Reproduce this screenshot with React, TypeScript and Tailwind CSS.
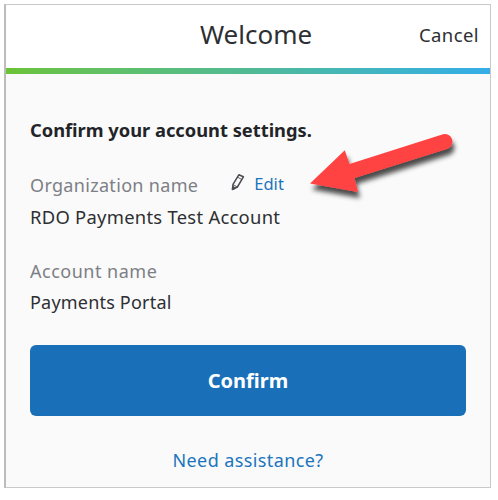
import type { ReactNode } from 'react';

interface FieldProps {
  label: ReactNode;
  value: ReactNode;
  action?: ReactNode;
}

function PencilIcon() {
  return (
    <svg
      className="-mt-[8px]"
      width="14"
      height="18"
      viewBox="0 0 14 18"
      fill="none"
      stroke="#4a4c50"
      strokeWidth="1.5"
      strokeLinejoin="round"
    >
      <path d="M7.8 1.8 12.4 3.8 6.4 14 1.5 16.4 2 11.4Z" />
      <path d="M6.6 4.2 10.6 6.4M2.2 11.6 6.2 14" strokeWidth="0.9" />
      <path d="M1.5 16.4 1.8 13.6 4 15.2Z" fill="#4a4c50" />
    </svg>
  );
}

function Field({ label, value, action }: FieldProps) {
  return (
    <div className="text-[18px] leading-[31px]">
      <div className="flex items-center text-[#7d7f86]">
        {label}
        {action}
      </div>
      <div className="flex text-[#2d2f33]">{value}</div>
    </div>
  );
}

function Arrow() {
  return (
    <svg
      className="absolute left-[300px] top-[124px] pointer-events-none"
      width="170"
      height="86"
      viewBox="300 124 170 86"
    >
      <defs>
        <filter id="arrow-shadow" x="-20%" y="-20%" width="140%" height="160%">
          <feDropShadow dx="2" dy="6" stdDeviation="2.8" floodColor="#000" floodOpacity="0.7" />
        </filter>
      </defs>
      <path
        filter="url(#arrow-shadow)"
        fill="#ff4343"
        d="M310 183.5 344.8 150.2 349.5 164 443 134.3A7.6 7.6 0 0 1 447.5 148.8L354.5 178 358 192Z"
      />
    </svg>
  );
}

export default function App() {
  return (
    <div className="relative w-[498px] h-[500px] bg-white pt-[4px] pl-[4px] font-['Noto_Sans',sans-serif]">
      <div className="w-[487px] h-[484px] flex flex-col border border-[#c9c9c9] border-l-2 border-l-[#bcbcbc] bg-[#fafafa]">
        <header className="h-[63px] shrink-0 grid grid-cols-[1fr_auto_1fr] items-center pb-[5px] pr-[11px] pl-[27px] bg-white text-[#2d2f33]">
          <span />
          <h1 className="text-[26px] leading-[36px]">Welcome</h1>
          <button className="justify-self-end text-[18.5px] leading-[24px] pt-[1px] tracking-[0.4px]">Cancel</button>
        </header>
        <div className="h-[6px] shrink-0 bg-linear-to-r from-[#6cc335] via-[#51ba94] to-[#35ade8]" />

        <main className="flex flex-col px-6 pt-[42px]">
          <h2 className="text-[18.3px] leading-[28px] font-bold text-[#222428] whitespace-nowrap">
            Confirm your account settings.
          </h2>

          <div className="mt-[26px] flex flex-col gap-[24px]">
            <Field
              label={<span className="tracking-[0.32px]">Organization name</span>}
              value={<span className="text-[18.4px] tracking-[0.27px]">RDO Payments Test Account</span>}
              action={
                <a className="ml-[33px] flex items-center gap-[9px] text-[16.5px] leading-[24px] text-[#1c75bc]">
                  <PencilIcon />
                  <span className="-mt-[3px]">Edit</span>
                </a>
              }
            />
            <Field
              label={<span className="tracking-[0.5px]">Account name</span>}
              value={<span className="tracking-[0.2px]">Payments Portal</span>}
            />
          </div>

          <button className="mt-[27px] h-[71px] rounded-[6px] bg-[#1a70b8] text-[20px] leading-[28px] font-bold text-white">
            Confirm
          </button>
          <a className="mt-[30px] text-center text-[18px] leading-[28px] tracking-[0.4px] text-[#1c75bc]">
            Need assistance?
          </a>
        </main>
      </div>
      <Arrow />
    </div>
  );
}
